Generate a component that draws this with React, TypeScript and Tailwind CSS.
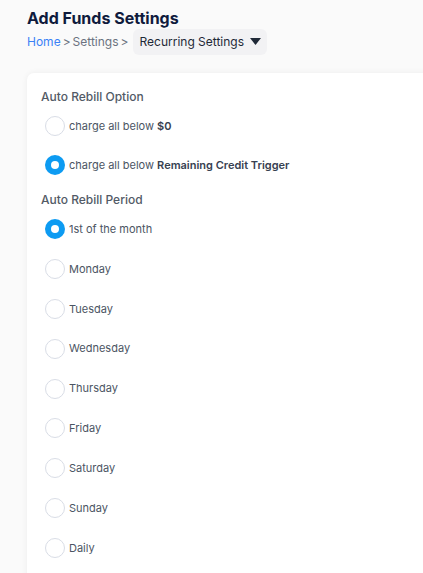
import React from "react";

function Radio({ checked, children }: { checked?: boolean; children: React.ReactNode }) {
  return (
    <div className="flex items-center h-5">
      {checked ? (
        <span className="w-5 h-5 rounded-full bg-[#0d9bf2] flex items-center justify-center shrink-0">
          <span className="w-2 h-2 rounded-full bg-white" />
        </span>
      ) : (
        <span className="w-5 h-5 rounded-full border border-[#d9dde6] bg-white shrink-0" />
      )}
      <span className="ml-[4px] text-[11px] text-[#4b5563]">{children}</span>
    </div>
  );
}

export default function App() {
  const days = ["Monday", "Tuesday", "Wednesday", "Thursday", "Friday", "Saturday", "Sunday", "Daily"];
  return (
    <div
      className="w-[423px] h-[573px] overflow-hidden bg-[#fafafa] pl-[27px]"
      style={{ fontFamily: "Inter, 'Noto Sans', sans-serif" }}
    >
      <h1 className="pt-[8px] text-[16px] leading-[20px] font-bold text-[#0f1b3d]">Add Funds Settings</h1>
      <div className="mt-[1px] flex items-center text-[12px] text-[#6b7280]">
        <span className="text-[#3b82f6]">Home</span>
        <span className="mx-[2px]">&gt;</span>
        <span>Settings</span>
        <span className="mx-[2px]">&gt;</span>
        <span className="ml-[3px] h-[26px] px-[6px] rounded-[6px] bg-[#f2f2f4] flex items-center text-[#1f2937]">
          Recurring Settings
          <svg className="ml-[6px]" width="11" height="8" viewBox="0 0 11 8">
            <path d="M0 0 H11 L5.5 7 Z" fill="#1f2937" />
          </svg>
        </span>
      </div>
      <div className="mt-[18px] w-[440px] h-[600px] rounded-[7px] bg-white shadow-[0_0_6px_rgba(0,0,0,0.06)] pl-[14px] pt-[14px]">
        <div className="text-[12px] leading-[20px] font-medium text-[#525a66]">Auto Rebill Option</div>
        <div className="ml-[4px] mt-[9px] flex flex-col gap-[19px]">
          <Radio>
            charge all below <b className="font-semibold text-[#374151]">$0</b>
          </Radio>
          <Radio checked>
            charge all below <b className="font-semibold text-[#374151]">Remaining Credit Trigger</b>
          </Radio>
        </div>
        <div className="mt-[15px] text-[12px] leading-[20px] font-medium text-[#525a66]">Auto Rebill Period</div>
        <div className="ml-[4px] mt-[9px] flex flex-col gap-[19.9px]">
          <Radio checked>1st of the month</Radio>
          {days.map((d) => (
            <Radio key={d}>{d}</Radio>
          ))}
        </div>
      </div>
    </div>
  );
}
